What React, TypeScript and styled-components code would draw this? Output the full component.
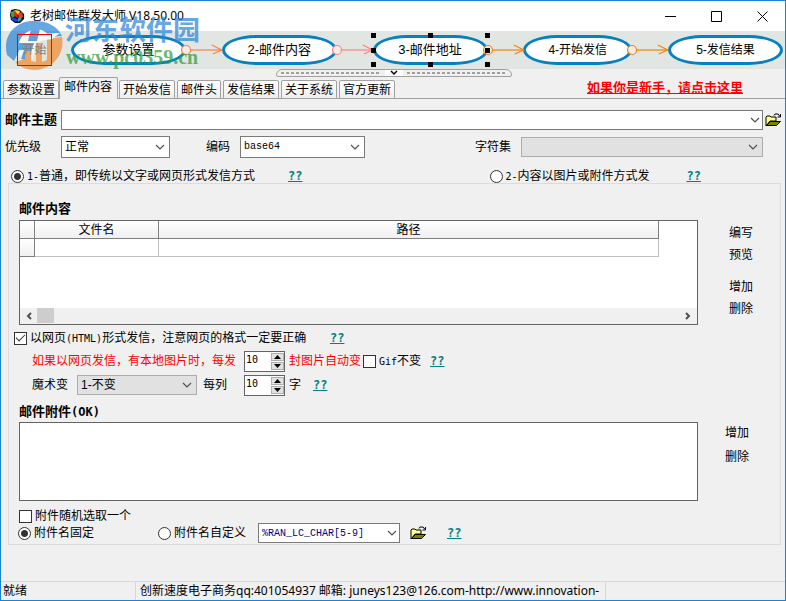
import React, { useState } from "react";
import styled, { createGlobalStyle, css } from "styled-components";

const GlobalStyle = createGlobalStyle`
  *, *::before, *::after { box-sizing: border-box; }
  body { margin: 0; background: #f0f0f0; }
  body, button, input, select {
    font-family: "Liberation Sans", "Noto Sans CJK SC", sans-serif;
    font-size: 12px;
    line-height: 16px;
    color: #000;
  }
  button { padding: 0; border: 0; background: none; cursor: pointer; white-space: nowrap; }
`;

const Window = styled.div`
  position: relative;
  display: flex;
  flex-direction: column;
  min-height: 100vh;
  border: 1px solid #1883d7;
  background: #f0f0f0;
  white-space: nowrap;
  overflow: hidden;
`;

const TitleBar = styled.header`
  display: flex;
  align-items: center;
  height: 30px;
  padding-left: 8px;
  background: #fff;
`;

const Title = styled.h1`
  flex: 1;
  margin: 0 0 0 5px;
  font: 400 12px/16px "Noto Sans", "Noto Sans CJK SC", sans-serif;
`;

const CaptionButton = styled.button`
  display: flex;
  align-items: center;
  justify-content: center;
  width: 46px;
  height: 30px;
`;

const FlowStrip = styled.nav`
  display: flex;
  align-items: center;
  height: 38px;
  padding: 0 2px 0 16px;
  background: #e2e6e3;
`;

const StartButton = styled.button`
  position: relative;
  z-index: 3;
  width: 35px;
  height: 32px;
  margin-right: 19px;
  border: 1px solid #f00;
  color: #808080;
`;

const FlowNode = styled.button<{ $compact?: boolean; $w?: number }>`
  position: relative;
  flex: none;
  width: ${(p) => p.$w ?? 115}px;
  height: 30px;
  border: 3px solid #0580c2;
  border-radius: 34px / 15px;
  background: #fff;
  font-size: ${(p) => (p.$compact ? 12 : 13)}px;
`;

const Handles = styled.span`
  position: absolute;
  inset: -5px;
  z-index: 2;
  display: grid;
  grid-template-columns: repeat(3, 5px);
  justify-content: space-between;
  align-content: space-between;
`;

const Handle = styled.i<{ $hidden?: boolean }>`
  width: 5px;
  height: 5px;
  background: ${(p) => (p.$hidden ? "transparent" : "#000")};
`;

const Link = styled.svg`
  flex: 1;
  min-width: 0;
  height: 14px;
  margin-left: -5px;
  overflow: visible;
  z-index: 1;
  fill: none;
`;

const Splitter = styled.button`
  display: flex;
  align-self: center;
  width: 236px;
  height: 8px;
  margin-left: 2px;
  border: 1px solid #a0a0a0;
  border-radius: 6px 6px 2px 2px;
  align-items: center;
`;

const Dots = styled.span`
  flex: 1;
  height: 2px;
  margin: 0 4px;
  background: repeating-linear-gradient(90deg, #a0a0a0 0 3px, transparent 3px 5px);
`;

const SplitterMark = styled.svg`
  width: 18px;
  height: 6px;
  background: #fff;
`;

const TabStrip = styled.div`
  display: flex;
  align-items: flex-end;
  height: 22px;
  padding-left: 0;
  box-shadow: inset 0 -1px #a0a0a0;
`;

const Tab = styled.button<{ $active: boolean }>`
  height: 19px;
  margin-left: 2px;
  padding: 0 3px;
  border: 1px solid #a0a0a0;
  border-radius: 2px 2px 0 0;
  background: linear-gradient(#fff, #eee);
  ${(p) =>
    p.$active &&
    css`
      height: 22px;
      margin: 0 -1px 0 0;
      padding: 0 5px 3px 4px;
      border-bottom: 0;
      background: #f0f0f0;
    `}
`;

const BeginnerLink = styled.a`
  margin: 0 42px 3px auto;
  font-size: 13px;
  font-weight: 700;
  color: #f00;
`;

const Settings = styled.section`
  display: flex;
  flex-direction: column;
  padding: 11px 3px 0 4px;
`;

const Row = styled.div<{ $h: number; $top?: number; $left?: number }>`
  display: flex;
  align-items: center;
  height: ${(p) => p.$h}px;
  margin-top: ${(p) => p.$top ?? 0}px;
  padding-left: ${(p) => p.$left ?? 0}px;
`;

const Spacer = styled.span<{ $w: number }>`
  flex: none;
  width: ${(p) => p.$w}px;
`;

const Label = styled.label<{ $w?: number; $left?: number; $red?: boolean }>`
  flex: none;
  width: ${(p) => (p.$w ? `${p.$w}px` : "auto")};
  margin-left: ${(p) => p.$left ?? 0}px;
  color: ${(p) => (p.$red ? "#f00" : "#000")};
`;

const StrongLabel = styled(Label)`
  font-size: 13px;
  font-weight: 700;
`;

const Latin = styled.span`
  font-family: "DejaVu Sans Mono", monospace;
  font-size: 10px;
`;

const StrongLatin = styled.span`
  font-family: "DejaVu Sans Mono", monospace;
  font-size: 12px;
`;

const ComboFrame = styled.div<{ $w?: number; $h?: number; $disabled?: boolean }>`
  display: grid;
  grid-template-columns: 1fr 18px;
  flex: ${(p) => (p.$w ? "none" : "1")};
  width: ${(p) => (p.$w ? `${p.$w}px` : "auto")};
  min-width: 0;
  height: ${(p) => p.$h ?? 20}px;
  border: 1px solid ${(p) => (p.$disabled ? "#adadad" : "#7a7a7a")};
  background: ${(p) => (p.$disabled ? "#e1e1e1" : "#fff")};
`;

const field = css<{ $mono?: boolean; $navy?: boolean }>`
  grid-row: 1;
  min-width: 0;
  height: 100%;
  padding: 0 0 0 3px;
  border: 0;
  outline: 0;
  background: transparent;
  color: ${(p) => (p.$navy ? "#000080" : "#000")};
  ${(p) => p.$mono && css`
    font-family: "Liberation Mono", monospace;
    font-size: 10px;
  `}
`;

const Select = styled.select`
  ${field}
  grid-column: 1 / 3;
  appearance: none;
`;

const TextField = styled.input`
  ${field}
  grid-column: 1;
  line-height: 18px;
`;

const ChevronSvg = styled.svg`
  grid-row: 1;
  grid-column: 2;
  align-self: center;
  width: 10px;
  height: 6px;
  margin-left: 4px;
  pointer-events: none;
`;

const DropButton = styled.button`
  grid-row: 1;
  grid-column: 2;
  display: grid;
`;

const IconButton = styled.button<{ $left: number }>`
  display: flex;
  flex: none;
  margin-left: ${(p) => p.$left}px;
`;

const Help = styled.a<{ $left: number }>`
  margin-left: ${(p) => p.$left}px;
  font: 700 12px/16px "DejaVu Sans Mono", monospace;
  color: #008080;
`;

const Radio = styled.input`
  flex: none;
  appearance: none;
  width: 13px;
  height: 13px;
  margin: 0;
  border: 1px solid #333;
  border-radius: 50%;
  background: #fff;
  &:checked { background: radial-gradient(circle, #333 0 3px, #fff 4px); }
`;

const Check = styled.input`
  display: grid;
  flex: none;
  appearance: none;
  width: 13px;
  height: 13px;
  margin: 0;
  border: 1px solid #333;
  background: #fff;
  &:checked::after {
    content: "";
    place-self: center;
    width: 9px;
    height: 5px;
    margin-bottom: 3px;
    border: solid #333;
    border-width: 0 0 1px 1px;
    transform: rotate(-45deg);
  }
`;

const Group = styled.section`
  display: flex;
  flex-direction: column;
  margin: 0 4px 0 7px;
  padding: 17px 0 1px;
  border: 1px solid #dcdcdc;
`;

const Heading = styled.h2<{ $top?: number }>`
  margin: ${(p) => p.$top ?? 0}px 0 0 10px;
  font-size: 13px;
  line-height: 16px;
`;

const Split = styled.div<{ $top: number; $right: number }>`
  display: flex;
  margin-top: ${(p) => p.$top}px;
  padding: 0 ${(p) => p.$right}px 0 10px;
`;

const GridBox = styled.div`
  display: flex;
  flex: 1;
  flex-direction: column;
  min-width: 0;
  height: 105px;
  border: 1px solid #646464;
  background: #fff;
`;

const FileTable = styled.table`
  width: 639px;
  table-layout: fixed;
  border-collapse: separate;
  border-spacing: 0;
`;

const Cell = styled.td`
  height: 18px;
  padding: 0;
  border: solid #c0c0c0;
  border-width: 0 1px 1px 0;
`;

const HeadCell = styled.th<{ $w: number }>`
  width: ${(p) => p.$w}px;
  height: 18px;
  padding: 1px 0 0;
  border: solid #808080;
  border-width: 0 1px 1px 0;
  background: linear-gradient(#fff, #f0f0f0);
  font-weight: 400;
`;

const ScrollBar = styled.div`
  display: flex;
  height: 16px;
  margin-top: auto;
  background: #f0f0f0;
`;

const ScrollButton = styled.button`
  display: flex;
  align-items: center;
  justify-content: center;
  width: 17px;
`;

const ScrollTrack = styled.div`
  flex: 1;
`;

const ScrollThumb = styled.div`
  width: 17px;
  height: 15px;
  background: #cdcdcd;
`;

const Actions = styled.div<{ $left: number; $top: number; $gap: number }>`
  display: flex;
  flex-direction: column;
  gap: ${(p) => p.$gap}px;
  margin-left: ${(p) => p.$left}px;
  padding-top: ${(p) => p.$top}px;
`;

const ActionPair = styled.div`
  display: flex;
  flex-direction: column;
  gap: 6px;
`;

const Attachments = styled.div`
  flex: 1;
  height: 79px;
  border: 1px solid #646464;
  background: #fff;
`;

const SpinFrame = styled.div<{ $left: number }>`
  display: flex;
  flex: none;
  width: 41px;
  height: 21px;
  margin-left: ${(p) => p.$left}px;
  border: 1px solid #646464;
  background: #fff;
`;

const SpinInput = styled.input`
  width: 26px;
  height: 15px;
  padding: 0 0 0 1px;
  border: 0;
  outline: 0;
  font: 10px/15px "DejaVu Sans Mono", monospace;
`;

const SpinButtons = styled.div`
  display: grid;
  flex: 1;
  gap: 1px;
  padding: 1px 0;
`;

const SpinButton = styled.button`
  display: flex;
  align-items: center;
  justify-content: center;
  border: 1px solid #adadad;
  background: #e1e1e1;
`;

const StatusBar = styled.footer`
  display: flex;
  height: 19px;
  margin-top: auto;
  border-top: 1px solid #d7d7d7;
  font: 12px/18px "Noto Sans", "Noto Sans CJK SC", sans-serif;
`;

const StatusPane = styled.div<{ $w: number }>`
  width: ${(p) => p.$w}px;
  padding-left: ${(p) => (p.$w > 200 ? 4 : 2)}px;
  border-right: 1px solid #d7d7d7;
  overflow: hidden;
`;

const Watermark = styled.div`
  position: absolute;
  left: 4px;
  top: 14px;
  display: flex;
  pointer-events: none;
  opacity: 0.72;
  z-index: 2;
`;

const WatermarkText = styled.div`
  display: flex;
  flex-direction: column;
  margin-left: 1px;
`;

const WatermarkName = styled.span`
  font-size: 27px;
  font-weight: 700;
  line-height: 32px;
  color: #2f86d6;
`;

const WatermarkUrl = styled.span`
  padding-left: 1px;
  font: 700 20px/20px "Liberation Serif", serif;
  color: #2f9e3a;
`;

const Chevron = () => (
  <ChevronSvg viewBox="0 0 10 6">
    <path d="M1 1l4 4 4-4" fill="none" stroke="#505050" strokeWidth="1.2" />
  </ChevronSvg>
);

const Connector = ({ color }: { color: string }) => (
  <Link stroke={color} strokeWidth="1.2">
    <circle cx="5" cy="7" r="4.5" fill="#f1ece8" />
    <line x1="10" y1="7" x2="100%" y2="7" />
    <svg x="100%" overflow="visible">
      <path d="M-10 2L0 7l-9 4" />
    </svg>
  </Link>
);

const Folder = () => (
  <svg width="17" height="14" viewBox="0 0 17 14">
    <path d="M1 13V4l1-1h3l1 1h5v4H5z" fill="#ffff80" stroke="#000" />
    <path d="M1.500 12.500L5.500 8.500h10l-4 4z" fill="#808000" stroke="#000" />
    <path d="M9 2.500l1-1.500h3l2 2.500M15.500 1v3h-3" fill="none" stroke="#000" />
  </svg>
);

const AppIcon = () => (
  <svg width="16" height="16" viewBox="0 0 16 16">
    <path d="M2 2l4-1 5 1 4 4v5l-4 4-5 0-4-3-1-5z" fill="#111" />
    <path d="M2 4l4-2 1 4-3 4-2-2z" fill="#20b040" />
    <path d="M6 2l5 1-1 4-3-1z" fill="#f8d820" />
    <path d="M5 4l3 1 1 5-4-2z" fill="#e82020" />
    <path d="M9 6l4-2 1 5-4 2z" fill="#f03828" />
    <path d="M2 9l4 1 4 2-3 2-4-2z" fill="#1840e0" />
    <path d="M9 10l4-1-1 3-3 2z" fill="#20a8c0" />
  </svg>
);

const WatermarkLogo = () => (
  <svg width="59" height="57" viewBox="0 0 59 57">
    <path d="M2 40C-3 20 11 5 30 6c13 0 23 6 27 15l-12 1C40 15 33 13 27 15 17 18 12 27 14 36L9 46z" fill="#2f86d6" />
    <path d="M14 36C12 27 17 18 27 15c6-2 13 0 18 7l-14 6-3 16-12 4z" fill="#fff" />
    <path d="M26 14h9l-3 12h-9zM14 28h15l-6 18-7-2 3-9h-7z" fill="#2f86d6" />
    <path d="M57 22c3 16-8 32-27 33-8 0-15-3-20-8l10-3v-8h6v10l5 1V28h6v19l5-2V24z" fill="#f28a30" />
    <path d="M36 19l19-1-8 6-13 2z" fill="#fff" />
  </svg>
);

const SpinBox = ({ id, left, label }: { id: string; left: number; label: string }) => {
  const [value, setValue] = useState(10);
  return (
    <SpinFrame $left={left}>
      <SpinInput id={id} aria-label={label} inputMode="numeric" value={value} onChange={(e) => setValue(Number(e.target.value) || 0)} />
      <SpinButtons>
        <SpinButton aria-label="+" onClick={() => setValue(value + 1)}>
          <svg width="7" height="4"><path d="M0 4l3.500-4L7 4z" /></svg>
        </SpinButton>
        <SpinButton aria-label="-" onClick={() => setValue(value - 1)}>
          <svg width="7" height="4"><path d="M0 0l3.500 4L7 0z" /></svg>
        </SpinButton>
      </SpinButtons>
    </SpinFrame>
  );
};

const tabs = ["参数设置", "邮件内容", "开始发信", "邮件头", "发信结果", "关于系统", "官方更新"];

export default function App() {
  const [active, setActive] = useState(1);
  return (
    <>
      <GlobalStyle />
      <Window>
        <TitleBar>
          <AppIcon />
          <Title>老树邮件群发大师 V18.50.00</Title>
          <CaptionButton aria-label="最小化">
            <svg width="11" height="11"><path d="M0 5.500h11" stroke="#000" /></svg>
          </CaptionButton>
          <CaptionButton aria-label="最大化">
            <svg width="11" height="11"><path d="M.5.5h10v10H.5z" stroke="#000" fill="none" /></svg>
          </CaptionButton>
          <CaptionButton aria-label="关闭">
            <svg width="11" height="11"><path d="M.5.5l10 10M10.500.5l-10 10" stroke="#000" /></svg>
          </CaptionButton>
        </TitleBar>

        <FlowStrip>
          <StartButton>开始</StartButton>
          <FlowNode>参数设置</FlowNode>
          <Connector color="#ff8040" />
          <FlowNode>2-邮件内容</FlowNode>
          <Connector color="#ff8080" />
          <FlowNode>
            3-邮件地址
            <Handles>
              {Array.from({ length: 9 }, (_, i) => <Handle key={i} $hidden={i === 4} />)}
            </Handles>
          </FlowNode>
          <Connector color="#ff8000" />
          <FlowNode $compact $w={109}>4-开始发信</FlowNode>
          <Connector color="#ff8000" />
          <FlowNode $compact>5-发信结果</FlowNode>
        </FlowStrip>

        <Splitter aria-label="折叠">
          <Dots />
          <SplitterMark viewBox="0 0 18 6"><path d="M6 1l3 3 3-3" fill="none" stroke="#000" strokeWidth="1.5" /></SplitterMark>
          <Dots />
        </Splitter>

        <TabStrip role="tablist">
          {tabs.map((name, i) => (
            <Tab key={name} role="tab" aria-selected={i === active} $active={i === active} onClick={() => setActive(i)}>
              {name}
            </Tab>
          ))}
          <BeginnerLink href="#help">如果你是新手，请点击这里</BeginnerLink>
        </TabStrip>

        <Settings>
          <Row $h={20}>
            <StrongLabel $w={56} htmlFor="subject">邮件主题</StrongLabel>
            <ComboFrame>
              <TextField id="subject" />
              <DropButton aria-label="历史主题"><Chevron /></DropButton>
            </ComboFrame>
            <IconButton $left={2} aria-label="打开"><Folder /></IconButton>
          </Row>
          <Row $h={22} $top={6}>
            <Label $w={56} htmlFor="priority">优先级</Label>
            <ComboFrame $w={109} $h={22}>
              <Select id="priority"><option>正常</option></Select>
              <Chevron />
            </ComboFrame>
            <Label $w={34} $left={36} htmlFor="encoding">编码</Label>
            <ComboFrame $w={125} $h={22}>
              <Select id="encoding" $mono><option>base64</option></Select>
              <Chevron />
            </ComboFrame>
            <Label $w={46} $left={110} htmlFor="charset">字符集</Label>
            <ComboFrame $disabled>
              <Select id="charset" disabled />
              <Chevron />
            </ComboFrame>
            <Spacer $w={19} />
          </Row>
          <Row $h={14} $top={11} $left={6}>
            <Radio type="radio" name="mode" id="mode1" defaultChecked />
            <Label $left={3} $w={228} htmlFor="mode1"><Latin>1-</Latin>普通，即传统以文字或网页形式发信方式</Label>
            <Help href="#mode1" $left={33}>??</Help>
            <Spacer $w={188} />
            <Radio type="radio" name="mode" id="mode2" />
            <Label $left={2} $w={144} htmlFor="mode2"><Latin>2-</Latin>内容以图片或附件方式发</Label>
            <Help href="#mode2" $left={37}>??</Help>
          </Row>
        </Settings>

        <Group>
          <Heading>邮件内容</Heading>
          <Split $top={3} $right={27}>
            <GridBox>
              <FileTable>
                <thead>
                  <tr>
                    <HeadCell $w={15} />
                    <HeadCell $w={124}>文件名</HeadCell>
                    <HeadCell $w={500}>路径</HeadCell>
                  </tr>
                </thead>
                <tbody>
                  <tr>
                    <HeadCell $w={15} />
                    <Cell />
                    <Cell />
                  </tr>
                </tbody>
              </FileTable>
              <ScrollBar>
                <ScrollButton aria-label="向左">
                  <svg width="6" height="8"><path d="M5 1L2 4l3 3" fill="none" stroke="#505050" strokeWidth="2" /></svg>
                </ScrollButton>
                <ScrollTrack><ScrollThumb /></ScrollTrack>
                <ScrollButton aria-label="向右">
                  <svg width="6" height="8"><path d="M1 1l3 3-3 3" fill="none" stroke="#505050" strokeWidth="2" /></svg>
                </ScrollButton>
              </ScrollBar>
            </GridBox>
            <Actions $left={31} $top={5} $gap={16}>
              <ActionPair><button>编写</button><button>预览</button></ActionPair>
              <ActionPair><button>增加</button><button>删除</button></ActionPair>
            </Actions>
          </Split>
          <Row $h={22} $top={2} $left={5}>
            <Check type="checkbox" id="html" defaultChecked />
            <Label $left={3} $w={276} htmlFor="html">以网页<Latin>(HTML)</Latin>形式发信，注意网页的格式一定要正确</Label>
            <Help href="#html" $left={24}>??</Help>
          </Row>
          <Row $h={22} $top={1} $left={23}>
            <Label $red $w={204} htmlFor="images">如果以网页发信，有本地图片时，每发</Label>
            <SpinBox id="images" left={8} label="每发" />
            <Label $red $left={4} htmlFor="images">封图片自动变</Label>
            <Spacer $w={2} />
            <Check type="checkbox" id="gif" />
            <Label $left={3} $w={42} htmlFor="gif"><Latin>Gif</Latin>不变</Label>
            <Help href="#gif" $left={9}>??</Help>
          </Row>
          <Row $h={22} $top={2} $left={23}>
            <Label $w={45} htmlFor="magic">魔术变</Label>
            <ComboFrame $w={120} $disabled>
              <Select id="magic"><option>1-不变</option></Select>
              <Chevron />
            </ComboFrame>
            <Label $left={6} $w={24} htmlFor="columns">每列</Label>
            <SpinBox id="columns" left={17} label="每列" />
            <Label $left={4} htmlFor="columns">字</Label>
            <Help href="#magic" $left={12}>??</Help>
          </Row>
          <Heading $top={8}>邮件附件<StrongLatin>(OK)</StrongLatin></Heading>
          <Split $top={2} $right={31}>
            <Attachments />
            <Actions $left={27} $top={3} $gap={8}>
              <button>增加</button>
              <button>删除</button>
            </Actions>
          </Split>
          <Row $h={14} $top={8} $left={10}>
            <Check type="checkbox" id="random" />
            <Label $left={3} htmlFor="random">附件随机选取一个</Label>
          </Row>
          <Row $h={20} $left={9}>
            <Radio type="radio" name="naming" id="fixed" defaultChecked />
            <Label $left={3} $w={124} htmlFor="fixed">附件名固定</Label>
            <Radio type="radio" name="naming" id="custom" />
            <Label $left={3} $w={84} htmlFor="custom">附件名自定义</Label>
            <ComboFrame $w={142}>
              <TextField $mono $navy aria-label="附件名" defaultValue="%RAN_LC_CHAR[5-9]" />
              <DropButton aria-label="选择附件名"><Chevron /></DropButton>
            </ComboFrame>
            <IconButton $left={10} aria-label="打开附件"><Folder /></IconButton>
            <Help href="#naming" $left={20}>??</Help>
          </Row>
        </Group>

        <StatusBar>
          <StatusPane $w={135}>就绪</StatusPane>
          <StatusPane $w={470}>创新速度电子商务qq:401054937 邮箱: juneys123@126.com-http://www.innovation-</StatusPane>
        </StatusBar>

        <Watermark>
          <WatermarkLogo />
          <WatermarkText>
            <WatermarkName>河东软件园</WatermarkName>
            <WatermarkUrl>www.pc0359.cn</WatermarkUrl>
          </WatermarkText>
        </Watermark>
      </Window>
    </>
  );
}
